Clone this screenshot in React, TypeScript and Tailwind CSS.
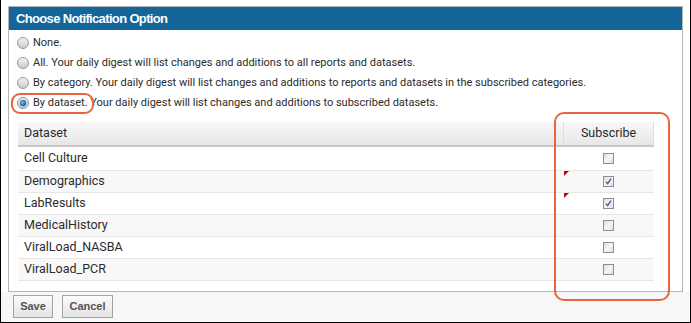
import React from "react"

const options = [
  { label: "None.", selected: false },
  { label: "All. Your daily digest will list changes and additions to all reports and datasets.", selected: false },
  {
    label: "By category. Your daily digest will list changes and additions to reports and datasets in the subscribed categories.",
    selected: false,
  },
  { label: "By dataset. Your daily digest will list changes and additions to subscribed datasets.", selected: true },
]

const datasets = [
  { name: "Cell Culture", checked: false, dirty: false },
  { name: "Demographics", checked: true, dirty: true },
  { name: "LabResults", checked: true, dirty: true },
  { name: "MedicalHistory", checked: false, dirty: false },
  { name: "ViralLoad_NASBA", checked: false, dirty: false },
  { name: "ViralLoad_PCR", checked: false, dirty: false },
]

function Radio({ selected }: { selected: boolean }) {
  return (
    <svg width="12" height="12" viewBox="0 0 12 12" className="shrink-0">
      <defs>
        <linearGradient id="rg" x1="0" y1="0" x2="0" y2="1">
          <stop offset="0" stopColor="#f4f4f4" />
          <stop offset="1" stopColor="#c9c9c9" />
        </linearGradient>
        <radialGradient id="rb" cx="0.4" cy="0.4" r="0.6">
          <stop offset="0" stopColor="#7fb4e6" />
          <stop offset="1" stopColor="#1f5f9e" />
        </radialGradient>
      </defs>
      <circle cx="6" cy="6" r="5.5" fill="url(#rg)" stroke={selected ? "#7d98b0" : "#9a9a9a"} />
      {selected && <circle cx="6" cy="6" r="3.2" fill="url(#rb)" />}
    </svg>
  )
}

function Checkbox({ checked }: { checked: boolean }) {
  return (
    <svg width="11" height="11" viewBox="0 0 11 11">
      <defs>
        <linearGradient id="cg" x1="0" y1="0" x2="1" y2="1">
          <stop offset="0" stopColor="#d8d8d8" />
          <stop offset="0.5" stopColor="#f6f6f6" />
          <stop offset="1" stopColor="#dcdcdc" />
        </linearGradient>
      </defs>
      <rect x="0.5" y="0.5" width="10" height="10" fill="url(#cg)" stroke="#8f8f8f" />
      {checked && <path d="M3 5.6 L4.6 7.6 L8 2.6" fill="none" stroke="#3e57a8" strokeWidth="1.4" />}
    </svg>
  )
}

export default function App() {
  return (
    <div className="relative flex h-[323px] w-[691px] flex-col overflow-hidden border-b border-l border-r border-black bg-white font-['Roboto',sans-serif]">
      {/* Panel */}
      <div className="ml-[7px] mt-[6px] flex h-[286px] w-[675px] flex-col border border-[#b5b5b5] bg-white">
        <div className="flex h-[23px] shrink-0 items-center bg-[#13659a] pl-[7px] font-['Liberation_Sans',Arial,sans-serif] text-[13px] font-bold tracking-[-0.65px] text-white">
          Choose Notification Option
        </div>

        <div className="pt-[3px]">
          {options.map((o) => (
            <div key={o.label} className="flex h-[20px] items-center gap-[4px] pl-[8px] text-[11px] text-[#2b2b2b]">
              <Radio selected={o.selected} />
              <span>{o.label}</span>
            </div>
          ))}
        </div>

        {/* Table */}
        <div className="ml-[9px] mt-[9px] w-[636px]">
          <div className="flex h-[25px] border-b-2 border-[#c9c9c9] bg-gradient-to-b from-[#f8f8f8] to-[#e7e7e7] text-[12.5px] text-[#2b2b2b]">
            <div className="flex flex-1 items-center pl-[6px]">Dataset</div>
            <div className="flex w-[91px] items-center justify-center border-l border-r border-[#dedede]">Subscribe</div>
          </div>
          {datasets.map((d, i) => (
            <div
              key={d.name}
              className={`flex border-b border-[#e8e8e8] text-[12.5px] text-[#2b2b2b] ${i === 0 ? "h-[24px]" : "h-[22px]"} ${
                i % 2 === 1 ? "bg-[#f8f8f8]" : "bg-white"
              }`}
            >
              <div className="flex flex-1 items-center pl-[6px]">{d.name}</div>
              <div className="relative flex w-[91px] items-center justify-center">
                {d.dirty && (
                  <svg width="5" height="5" viewBox="0 0 5 5" className="absolute left-[1px] top-0">
                    <polygon points="0,0 5,0 0,5" fill="#cc0000" />
                  </svg>
                )}
                <Checkbox checked={d.checked} />
              </div>
            </div>
          ))}
        </div>
      </div>

      {/* Footer */}
      <div className="flex flex-1 items-start gap-[9px] bg-[#f7f7f7] pl-[12px] pt-[3px] font-['Liberation_Sans',Arial,sans-serif] text-[11px] font-bold text-[#555]">
        <button className="h-[23px] w-[40px] border border-[#a3a3a3] bg-gradient-to-b from-[#fcfcfc] to-[#e4e4e4]">Save</button>
        <button className="h-[23px] w-[51px] border border-[#a3a3a3] bg-gradient-to-b from-[#fcfcfc] to-[#e4e4e4]">Cancel</button>
      </div>

      {/* Highlights */}
      <div className="absolute left-[10px] top-[93px] h-[21px] w-[83px] rounded-[9px] border-2 border-[#e8643c]" />
      <div className="absolute left-[553px] top-[112px] h-[189px] w-[116px] rounded-[10px] border-2 border-[#e8643c]" />
    </div>
  )
}
